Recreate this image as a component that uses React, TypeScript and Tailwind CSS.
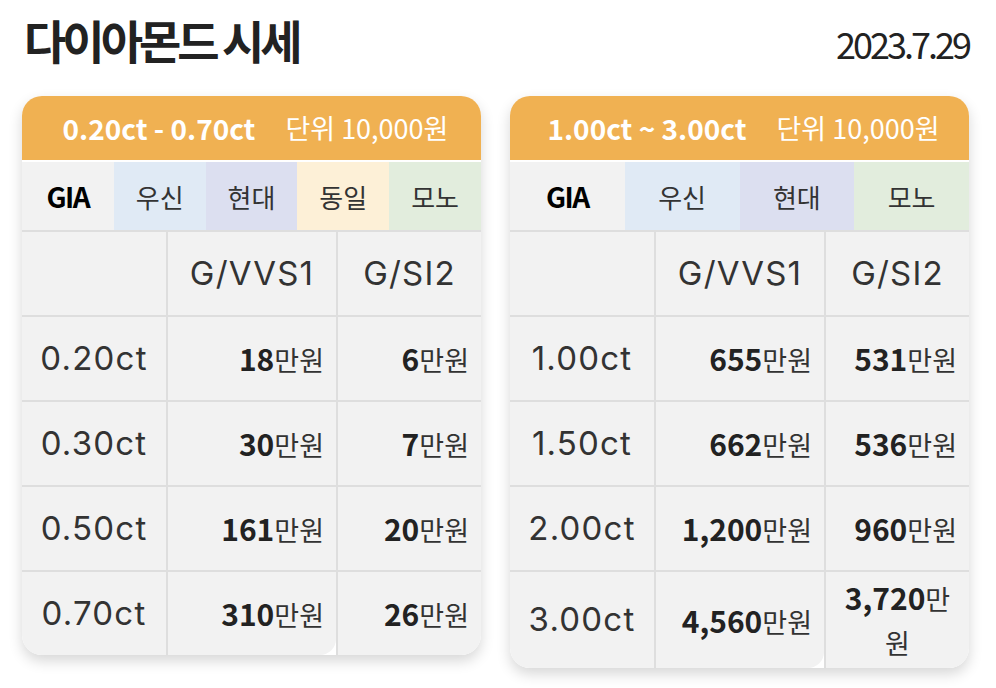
import { FC } from "react";

const KR = "font-['Noto_Sans_CJK_KR',sans-serif]";
const LAT = "font-['Inter','Noto_Sans_CJK_KR',sans-serif]";

interface Tab {
  label: string;
  bg: string;
}

interface Row {
  carat: string;
  vvs: string;
  si: string;
  wrapSi?: boolean;
}

interface CardProps {
  range: string;
  tabs: Tab[];
  rows: Row[];
}

const PriceCell: FC<{ value: string; wrap?: boolean; rounded?: boolean }> = ({
  value,
  wrap,
  rounded,
}) => (
  <div
    className={`bg-[#f2f2f2] border-l-2 border-t-2 border-[#dedede] flex items-center px-[12px] ${
      wrap ? "justify-center" : "justify-end text-right"
    } ${rounded ? "rounded-br-[16px]" : ""}`}
  >
    {wrap ? (
      // narrow column: the price breaks before 원, lines centred
      <div className="flex flex-col items-center text-[27px] text-[#333] leading-[44px] py-[3px]">
        <div>
          <b className="text-[#222] font-bold text-[30px]">{value}</b>만
        </div>
        <div>원</div>
      </div>
    ) : (
      <span className="text-[27px] text-[#333]">
        <b className="text-[#222] font-bold text-[30px]">{value}</b>만원
      </span>
    )}
  </div>
);

const PriceCard: FC<CardProps> = ({ range, tabs, rows }) => {
  return (
    <div className="w-[459px] bg-white rounded-[20px] overflow-hidden shadow-[0_6px_14px_rgba(0,0,0,0.16)] self-start">
      <div className="h-[64px] bg-[#f0b152] flex items-center justify-center gap-[30px] pl-[8px] text-white border-b-2 border-white box-content">
        <span className="text-[28px] font-bold">{range}</span>
        <span className="text-[27px]">단위 10,000원</span>
      </div>
      <div className="flex h-[70px] border-b-2 border-[#dedede]">
        {tabs.map((tab) => (
          <div
            key={tab.label}
            className={`flex-1 flex items-center justify-center ${tab.bg} ${
              tab.label === "GIA"
                ? "text-[28px] font-bold text-black tracking-[-1.5px]"
                : "text-[26px] text-[#333]"
            }`}
          >
            {tab.label}
          </div>
        ))}
      </div>
      <div className="grid grid-cols-[144px_170px_1fr]">
        <div className="h-[83px] bg-[#f2f2f2]" />
        <div className={`bg-[#f2f2f2] border-l-2 border-[#dedede] flex items-center justify-center ${LAT} text-[33px] tracking-[1.2px] text-[#333]`}>
          G/VVS1
        </div>
        <div className={`bg-[#f2f2f2] border-l-2 border-[#dedede] flex items-center justify-center ${LAT} text-[33px] tracking-[1.2px] text-[#333]`}>
          G/SI2
        </div>
        {rows.map((row, i) => (
          <div key={row.carat} className="contents">
            <div
              className={`min-h-[85px] bg-[#f2f2f2] border-t-2 border-[#dedede] flex items-center justify-center ${LAT} text-[33px] tracking-[1.2px] text-[#333]`}
            >
              {row.carat}
            </div>
            <PriceCell value={row.vvs} rounded={i === rows.length - 1} />
            <PriceCell value={row.si} wrap={row.wrapSi} />
          </div>
        ))}
      </div>
    </div>
  );
};

const App: FC = () => {
  return (
    <div className={`w-[996px] h-[688px] bg-white ${KR} text-[#222] overflow-hidden`}>
      <div className="flex justify-between items-center pl-[24px] pr-[27px] h-[78px]">
        <h1 className="text-[46px] font-bold tracking-[-4px] leading-none text-[#222]">다이아몬드 시세</h1>
        <div className="text-[36px] tracking-[-3px] leading-none pt-[8px] text-[#222]">2023.7.29</div>
      </div>
      <div className="flex gap-[29px] pl-[22px] pt-[18px]">
        <PriceCard
          range="0.20ct - 0.70ct"
          tabs={[
            { label: "GIA", bg: "bg-[#f2f2f2]" },
            { label: "우신", bg: "bg-[#e0eaf5]" },
            { label: "현대", bg: "bg-[#dcdff0]" },
            { label: "동일", bg: "bg-[#fdf0d7]" },
            { label: "모노", bg: "bg-[#e2eddd]" },
          ]}
          rows={[
            { carat: "0.20ct", vvs: "18", si: "6" },
            { carat: "0.30ct", vvs: "30", si: "7" },
            { carat: "0.50ct", vvs: "161", si: "20" },
            { carat: "0.70ct", vvs: "310", si: "26" },
          ]}
        />
        <PriceCard
          range="1.00ct ~ 3.00ct"
          tabs={[
            { label: "GIA", bg: "bg-[#f2f2f2]" },
            { label: "우신", bg: "bg-[#e0eaf5]" },
            { label: "현대", bg: "bg-[#dcdff0]" },
            { label: "모노", bg: "bg-[#e2eddd]" },
          ]}
          rows={[
            { carat: "1.00ct", vvs: "655", si: "531" },
            { carat: "1.50ct", vvs: "662", si: "536" },
            { carat: "2.00ct", vvs: "1,200", si: "960" },
            { carat: "3.00ct", vvs: "4,560", si: "3,720", wrapSi: true },
          ]}
        />
      </div>
    </div>
  );
};

export default App;
